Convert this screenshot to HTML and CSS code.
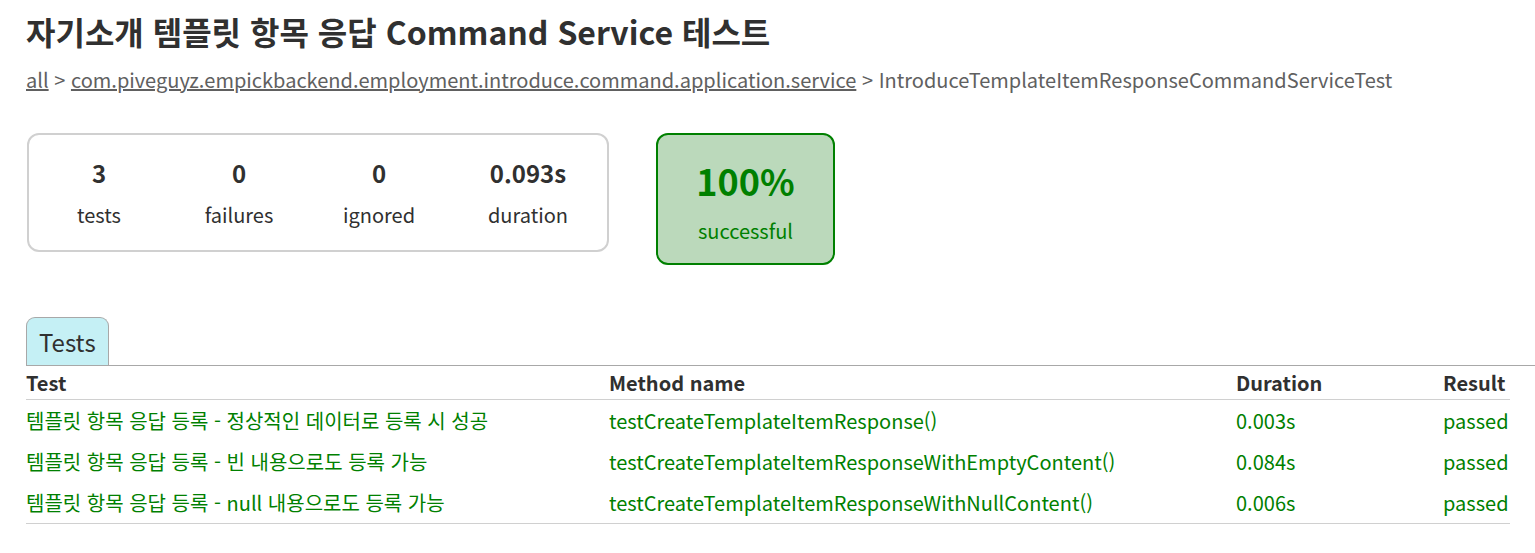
FILE: index.html
```html
<!DOCTYPE html>
<html lang="ko">
<head>
<meta charset="utf-8">
<title>Test results - IntroduceTemplateItemResponseCommandServiceTest</title>
<link rel="stylesheet" href="styles.css">
</head>
<body>
<div class="content">
  <h1 class="title">자기소개 템플릿 항목 응답 Command Service 테스트</h1>
  <div class="breadcrumbs">
    <a href="#">all</a> &gt; <a href="#">com.piveguyz.empickbackend.employment.introduce.command.application.service</a> &gt; IntroduceTemplateItemResponseCommandServiceTest
  </div>

  <div class="summary">
    <div class="summary-group">
      <div class="info-box">
        <div class="counter">3</div>
        <p>tests</p>
      </div>
      <div class="info-box">
        <div class="counter">0</div>
        <p>failures</p>
      </div>
      <div class="info-box">
        <div class="counter">0</div>
        <p>ignored</p>
      </div>
      <div class="info-box info-box-duration">
        <div class="counter">0.093s</div>
        <p>duration</p>
      </div>
    </div>
    <div class="success-rate">
      <div class="percent">100%</div>
      <p>successful</p>
    </div>
  </div>

  <ul class="tab-links">
    <li class="tab selected">Tests</li>
  </ul>

  <table class="tests">
    <colgroup>
      <col class="col-test">
      <col class="col-method">
      <col class="col-duration">
      <col class="col-result">
    </colgroup>
    <thead>
      <tr>
        <th>Test</th>
        <th>Method name</th>
        <th>Duration</th>
        <th>Result</th>
      </tr>
    </thead>
    <tbody>
      <tr>
        <td>템플릿 항목 응답 등록 - 정상적인 데이터로 등록 시 성공</td>
        <td>testCreateTemplateItemResponse()</td>
        <td>0.003s</td>
        <td>passed</td>
      </tr>
      <tr>
        <td>템플릿 항목 응답 등록 - 빈 내용으로도 등록 가능</td>
        <td>testCreateTemplateItemResponseWithEmptyContent()</td>
        <td>0.084s</td>
        <td>passed</td>
      </tr>
      <tr>
        <td>템플릿 항목 응답 등록 - null 내용으로도 등록 가능</td>
        <td>testCreateTemplateItemResponseWithNullContent()</td>
        <td>0.006s</td>
        <td>passed</td>
      </tr>
    </tbody>
  </table>
</div>
</body>
</html>
```
FILE: styles.css
```css
html, body {
  margin: 0;
  padding: 0;
}

body {
  font-family: "Noto Sans CJK KR", "Noto Sans", sans-serif;
  font-size: 20px;
  color: #303030;
  background: #ffffff;
}

.content {
  padding: 8px 25px 30px 26px;
}

.title {
  margin: 0 0 11px 0;
  font-size: 32px;
  font-weight: bold;
  white-space: nowrap;
  color: #303030;
}

.breadcrumbs,
.breadcrumbs a {
  color: #606060;
}

.breadcrumbs {
  white-space: nowrap;
}

.summary {
  display: flex;
  align-items: flex-start;
  gap: 47px;
  margin-top: 39px;
  margin-left: 1px;
  margin-bottom: 52px;
}

.summary-group {
  display: flex;
  border: solid 2px #d0d0d0;
  border-radius: 12px;
}

.info-box {
  width: 140px;
  padding: 20px 0 21px 0;
  text-align: center;
}

.info-box-duration {
  width: 158px;
}

.info-box p,
.success-rate p {
  margin: 0;
}

.counter {
  font-size: 24px;
  font-weight: bold;
  margin-bottom: 10px;
}

.success-rate {
  width: 175px;
  padding: 19px 0 18px 0;
  text-align: center;
  color: #008000;
  background-color: #bbd9bb;
  border: solid 2px #008000;
  border-radius: 12px;
}

.percent {
  font-size: 36px;
  font-weight: bold;
  margin-bottom: 10px;
}

.tab-links {
  display: flex;
  margin: 0 -25px 0 0;
  padding: 0;
  list-style: none;
  border-bottom: solid 1px #a8a8a8;
}

.tab {
  padding: 6px 12px 6px 12px;
  font-size: 24px;
  border: solid 1px #a8a8a8;
  border-bottom: none;
  border-radius: 9px 9px 0 0;
  background-color: #f0f0f0;
}

.tab.selected {
  background-color: #c5f0f5;
}

.tests {
  width: 1484px;
  table-layout: fixed;
  border-collapse: collapse;
  border-bottom: solid 1px #d0d0d0;
}

.col-test { width: 583px; }
.col-method { width: 627px; }
.col-duration { width: 207px; }
.col-result { width: 67px; }

.tests th {
  text-align: left;
  white-space: nowrap;
  font-weight: bold;
  padding: 2px 0 2px 0;
  border-bottom: solid 1px #d0d0d0;
}

.tests td {
  white-space: nowrap;
  padding: 6px 0 6px 0;
  color: #008000;
}
```
